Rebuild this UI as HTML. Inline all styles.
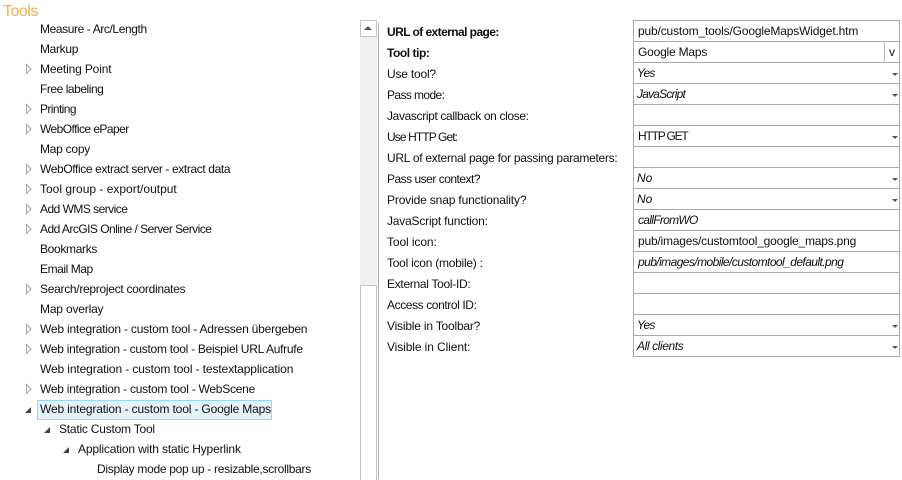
<!DOCTYPE html>
<html><head><meta charset="utf-8"><style>
html,body{margin:0;padding:0;background:#fff}
body{width:902px;height:479px;position:relative;overflow:hidden;font-family:"Liberation Sans",sans-serif;font-size:12px;color:#111}
.t,.l,.v{position:absolute;white-space:nowrap;line-height:16px}
.l b{font-weight:bold}
.r{position:absolute;left:633px;width:265px;height:20px;border:1px solid #a9a9a9}
.a{position:absolute;width:0;height:0}
.d{position:absolute;left:892px;width:0;height:0;border-left:3px solid transparent;border-right:3px solid transparent;border-top:3px solid #555}
i{font-style:italic}
</style></head><body>
<div style="position:absolute;left:3px;top:1px;font-size:16px;line-height:21px;color:#f7ab4d;letter-spacing:-.5px">Tools</div>

<div class="t" style="left:40px;top:21px;letter-spacing:-.4px">Measure - Arc/Length</div>
<div class="t" style="left:40px;top:41px;letter-spacing:-.33px">Markup</div>
<div class="t" style="left:40px;top:61px;letter-spacing:-.15px">Meeting Point</div>
<div class="t" style="left:40px;top:81px;letter-spacing:-.46px">Free labeling</div>
<div class="t" style="left:40px;top:101px;letter-spacing:-.6px">Printing</div>
<div class="t" style="left:40px;top:121px;letter-spacing:-.56px">WebOffice ePaper</div>
<div class="t" style="left:40px;top:141px;letter-spacing:-.25px">Map copy</div>
<div class="t" style="left:40px;top:161px;letter-spacing:-.38px">WebOffice extract server - extract data</div>
<div class="t" style="left:40px;top:181px">Tool group - export/output</div>
<div class="t" style="left:40px;top:201px;letter-spacing:-.53px">Add WMS service</div>
<div class="t" style="left:40px;top:221px;letter-spacing:-.53px">Add ArcGIS Online / Server Service</div>
<div class="t" style="left:40px;top:241px;letter-spacing:-.33px">Bookmarks</div>
<div class="t" style="left:40px;top:261px;letter-spacing:-.44px">Email Map</div>
<div class="t" style="left:40px;top:281px;letter-spacing:-.29px">Search/reproject coordinates</div>
<div class="t" style="left:40px;top:301px;letter-spacing:-.18px">Map overlay</div>
<div class="t" style="left:40px;top:321px;letter-spacing:-.2px">Web integration - custom tool - Adressen übergeben</div>
<div class="t" style="left:40px;top:341px;letter-spacing:-.27px">Web integration - custom tool - Beispiel URL Aufrufe</div>
<div class="t" style="left:40px;top:361px;letter-spacing:-.12px">Web integration - custom tool - testextapplication</div>
<div class="t" style="left:40px;top:381px;letter-spacing:-.25px">Web integration - custom tool - WebScene</div>
<div style="position:absolute;left:37px;top:400px;width:233px;height:18px;background:#e5f3fb;border:1px solid #99d5f7"></div>
<div class="t" style="left:40px;top:401px;letter-spacing:-.16px">Web integration - custom tool - Google Maps</div>
<div class="t" style="left:59px;top:421px;letter-spacing:-.22px">Static Custom Tool</div>
<div class="t" style="left:78px;top:441px;letter-spacing:-.16px">Application with static Hyperlink</div>
<div class="t" style="left:97px;top:461px;letter-spacing:-.29px">Display mode pop up - resizable,scrollbars</div>

<svg style="position:absolute;left:0;top:0" width="100" height="479">
<g fill="#fff" stroke="#a6a6a6" stroke-width="1">
<path d="M26.500 64.500v9l4.500-4.500z"/><path d="M26.500 104.500v9l4.500-4.500z"/><path d="M26.500 124.500v9l4.500-4.500z"/><path d="M26.500 164.500v9l4.500-4.500z"/><path d="M26.500 184.500v9l4.500-4.500z"/><path d="M26.500 204.500v9l4.500-4.500z"/><path d="M26.500 224.500v9l4.500-4.500z"/><path d="M26.500 284.500v9l4.500-4.500z"/><path d="M26.500 324.500v9l4.500-4.500z"/><path d="M26.500 344.500v9l4.500-4.500z"/><path d="M26.500 384.500v9l4.500-4.500z"/>
</g>
<g fill="#444">
<path d="M25 413h6v-6z"/><path d="M44 433h6v-6z"/><path d="M63 453h6v-6z"/>
</g>
</svg>

<div style="position:absolute;left:360px;top:20px;width:17px;height:265px;background:#f0f0f0"></div>
<div style="position:absolute;left:360px;top:20px;width:15px;height:15px;background:#fff;border:1px solid #c4c4c4"></div>
<div class="a" style="left:364px;top:26px;border-left:4px solid transparent;border-right:4px solid transparent;border-bottom:4px solid #555"></div>
<div style="position:absolute;left:360px;top:285px;width:15px;height:194px;background:#fff;border:1px solid #c4c4c4;border-bottom:0"></div>
<div style="position:absolute;left:378px;top:23px;width:1px;height:456px;background:#aaa"></div>

<div class="l" style="left:387px;top:24px;letter-spacing:-.57px"><b>URL of external page:</b></div>
<div class="l" style="left:387px;top:45px;letter-spacing:-.45px"><b>Tool tip:</b></div>
<div class="l" style="left:387px;top:66px;letter-spacing:-.2px">Use tool?</div>
<div class="l" style="left:387px;top:87px;letter-spacing:-.6px">Pass mode:</div>
<div class="l" style="left:387px;top:108px;letter-spacing:-.36px">Javascript callback on close:</div>
<div class="l" style="left:387px;top:129px;letter-spacing:-.9px">Use HTTP Get:</div>
<div class="l" style="left:387px;top:150px;letter-spacing:-.27px">URL of external page for passing parameters:</div>
<div class="l" style="left:387px;top:171px;letter-spacing:-.5px">Pass user context?</div>
<div class="l" style="left:387px;top:192px;letter-spacing:-.15px">Provide snap functionality?</div>
<div class="l" style="left:387px;top:213px;letter-spacing:-.2px">JavaScript function:</div>
<div class="l" style="left:387px;top:234px;letter-spacing:-.1px">Tool icon:</div>
<div class="l" style="left:387px;top:255px;letter-spacing:-.25px">Tool icon (mobile) :</div>
<div class="l" style="left:387px;top:276px;letter-spacing:-.3px">External Tool-ID:</div>
<div class="l" style="left:387px;top:297px;letter-spacing:-.4px">Access control ID:</div>
<div class="l" style="left:387px;top:318px;letter-spacing:-.2px">Visible in Toolbar?</div>
<div class="l" style="left:387px;top:339px;letter-spacing:-.1px">Visible in Client:</div>

<div class="r" style="top:20px"></div><div class="r" style="top:41px"></div><div class="r" style="top:62px"></div><div class="r" style="top:83px"></div><div class="r" style="top:104px"></div><div class="r" style="top:125px"></div><div class="r" style="top:146px"></div><div class="r" style="top:167px"></div><div class="r" style="top:188px"></div><div class="r" style="top:209px"></div><div class="r" style="top:230px"></div><div class="r" style="top:251px"></div><div class="r" style="top:272px"></div><div class="r" style="top:293px"></div><div class="r" style="top:314px"></div><div class="r" style="top:335px"></div>
<div style="position:absolute;left:884px;top:42px;width:1px;height:20px;background:#bbb"></div>

<div class="v" style="left:638px;top:23px;letter-spacing:-.16px">pub/custom_tools/GoogleMapsWidget.htm</div>
<div class="v" style="left:638px;top:44px;letter-spacing:-.2px">Google Maps</div>
<div class="v" style="left:889px;top:44px">v</div>
<div class="v" style="left:637px;top:65px;letter-spacing:-.8px"><i>Yes</i></div>
<div class="v" style="left:637px;top:86px;letter-spacing:-.8px"><i>JavaScript</i></div>
<div class="v" style="left:638px;top:128px;letter-spacing:-1.2px">HTTP GET</div>
<div class="v" style="left:637px;top:170px"><i>No</i></div>
<div class="v" style="left:637px;top:191px"><i>No</i></div>
<div class="v" style="left:638px;top:212px;letter-spacing:-.7px"><i>callFromWO</i></div>
<div class="v" style="left:638px;top:233px;letter-spacing:-.2px">pub/images/customtool_google_maps.png</div>
<div class="v" style="left:638px;top:254px;letter-spacing:-.57px"><i>pub/images/mobile/customtool_default.png</i></div>
<div class="v" style="left:637px;top:317px;letter-spacing:-.8px"><i>Yes</i></div>
<div class="v" style="left:637px;top:338px;letter-spacing:-.4px"><i>All clients</i></div>

<div class="d" style="top:73px"></div><div class="d" style="top:94px"></div><div class="d" style="top:136px"></div><div class="d" style="top:178px"></div><div class="d" style="top:199px"></div><div class="d" style="top:325px"></div><div class="d" style="top:346px"></div>
</body></html>
